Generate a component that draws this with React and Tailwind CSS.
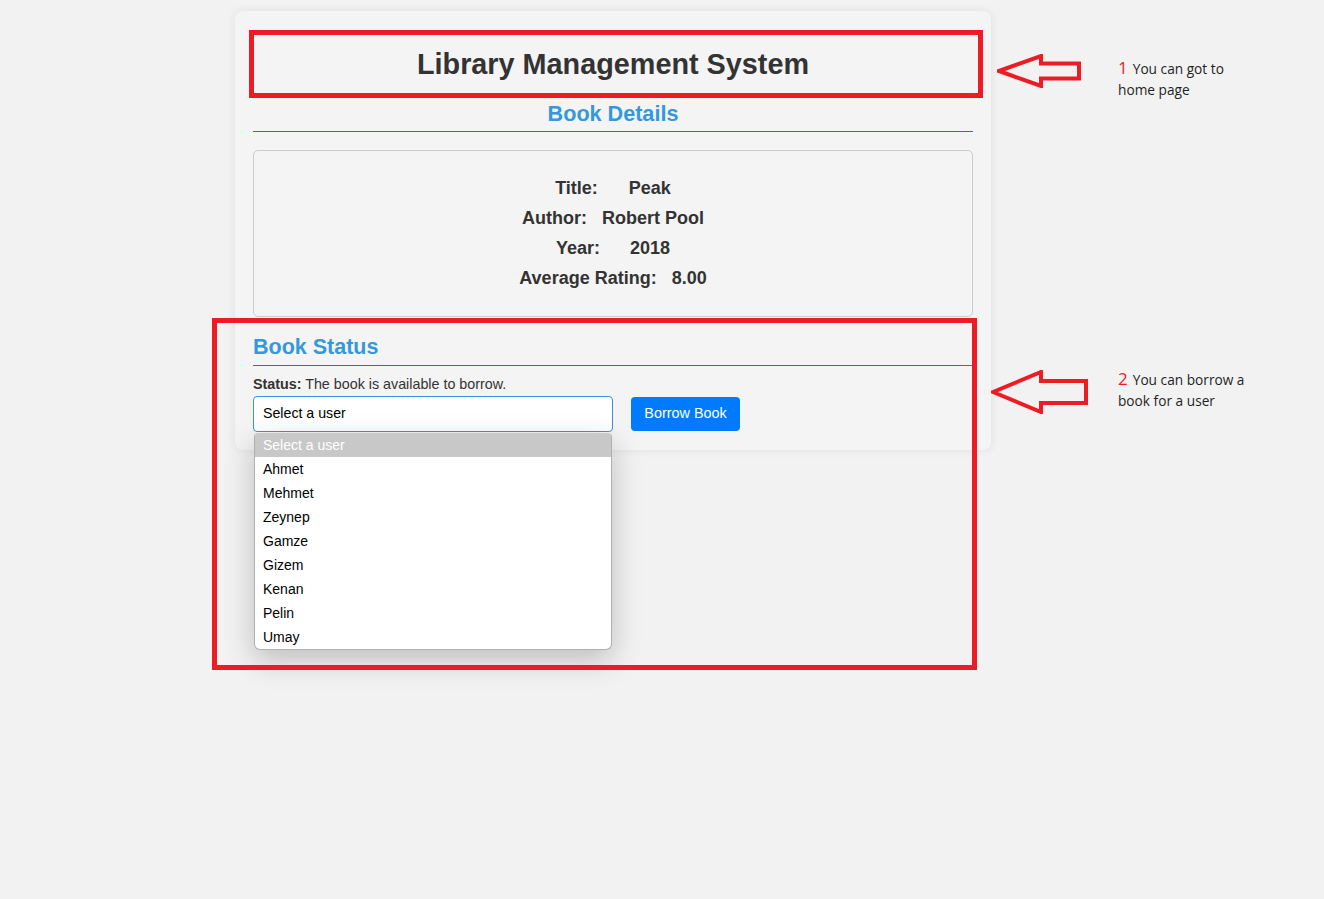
import React from "react";

const users = ["Ahmet", "Mehmet", "Zeynep", "Gamze", "Gizem", "Kenan", "Pelin", "Umay"];

const details = [
    { label: "Title:", value: "Peak", gap: "gap-[31px]" },
    { label: "Author:", value: "Robert Pool", gap: "gap-[15px]" },
    { label: "Year:", value: "2018", gap: "gap-[30px]" },
    { label: "Average Rating:", value: "8.00", gap: "gap-[15px]" }
];

function Arrow({ className, w, h, head, shaft }) {
    // outlined left-pointing arrow, annotation style
    const mid = h / 2;
    const pts = [
        [2, mid],
        [head, 2],
        [head, mid - shaft / 2],
        [w - 2, mid - shaft / 2],
        [w - 2, mid + shaft / 2],
        [head, mid + shaft / 2],
        [head, h - 2]
    ].map(p => p.join(",")).join(" ");
    return (
        <svg className={className} width={w} height={h} viewBox={`0 0 ${w} ${h}`}>
            <polygon points={pts} fill="none" stroke="#ed1c24" strokeWidth="4" strokeLinejoin="miter" />
        </svg>
    );
}

function Note({ className, num, first, second }) {
    return (
        <div className={`absolute font-['Open_Sans',sans-serif] text-[13.7px] leading-[21px] text-[#1f1f1f] ${className}`}>
            <div><span className="text-[#ed1c24] text-[17px] mr-[5px]">{num}</span>{first}</div>
            <div>{second}</div>
        </div>
    );
}

export default function App() {
    return (
        <div className="relative min-h-screen bg-[#f2f2f2] font-['Liberation_Sans',Arial,sans-serif] text-[#333] pt-[11px] pl-[235px]">
            <div className="w-[756px] bg-[#f4f4f4] rounded-lg shadow-[0_0_10px_rgba(0,0,0,0.08)] px-[18px] pt-[36px] pb-[18px]">
                <h1 className="text-center text-[28.8px] leading-[34px] font-bold">Library Management System</h1>

                <h2 className="mt-[19px] text-center text-[21.6px] leading-[27px] font-bold text-[#3498db] pb-[4px] border-b border-[#007bff]">Book Details</h2>

                <div className="mt-[18px] border border-[#cccccc] rounded-[5px] pt-[22px] pb-[23px] flex flex-col items-center text-[18px] leading-[30px] font-bold">
                    {details.map(d => (
                        <div key={d.label} className={`flex ${d.gap}`}>
                            <span>{d.label}</span>
                            <span>{d.value}</span>
                        </div>
                    ))}
                </div>

                <h2 className="mt-[17px] text-[21.5px] leading-[27px] font-bold text-[#3498db] pb-[4px] border-b border-[#007bff]">Book Status</h2>

                <p className="mt-[10px] text-[14.3px] leading-[16px]">
                    <strong>Status:</strong> The book is available to borrow.
                </p>

                <div className="mt-[4px] flex items-center gap-[18px]">
                    <div className="relative">
                        <div className="w-[360px] h-[36px] bg-white border border-[#3d8fe8] rounded-[4px] px-[9px] flex items-center text-[14.2px] text-black">
                            Select a user
                        </div>
                        <div className="absolute left-[1px] top-[37px] w-[358px] bg-white border border-[#b0b0b0] border-t-0 rounded-b-[6px] rounded-t-[4px] overflow-hidden shadow-[0_10px_30px_rgba(0,0,0,0.22)] z-10 text-[14px] text-black">
                            <div className="h-[24px] px-[8px] flex items-center bg-[#c8c8c8] text-white">Select a user</div>
                            {users.map(u => (
                                <div key={u} className="h-[24px] px-[8px] flex items-center">{u}</div>
                            ))}
                        </div>
                    </div>
                    <button className="w-[109px] h-[34px] bg-[#007bff] text-white text-[14.4px] rounded-[4px]">Borrow Book</button>
                </div>
            </div>

            {/* annotation overlays */}
            <div className="absolute left-[249px] top-[30px] w-[734px] h-[68px] border-[5px] border-[#ed1c24] pointer-events-none" />
            <div className="absolute left-[212px] top-[318px] w-[765px] h-[352px] border-[5px] border-[#ed1c24] pointer-events-none z-20" />

            <Arrow className="absolute left-[997px] top-[54px]" w={84} h={34} head={44} shaft={15} />
            <Arrow className="absolute left-[991px] top-[370px]" w={97} h={44} head={50} shaft={22} />

            <Note className="left-[1118px] top-[57px]" num="1" first="You can got to" second="home page" />
            <Note className="left-[1118px] top-[368px]" num="2" first="You can borrow a" second="book for a user" />
        </div>
    );
}
